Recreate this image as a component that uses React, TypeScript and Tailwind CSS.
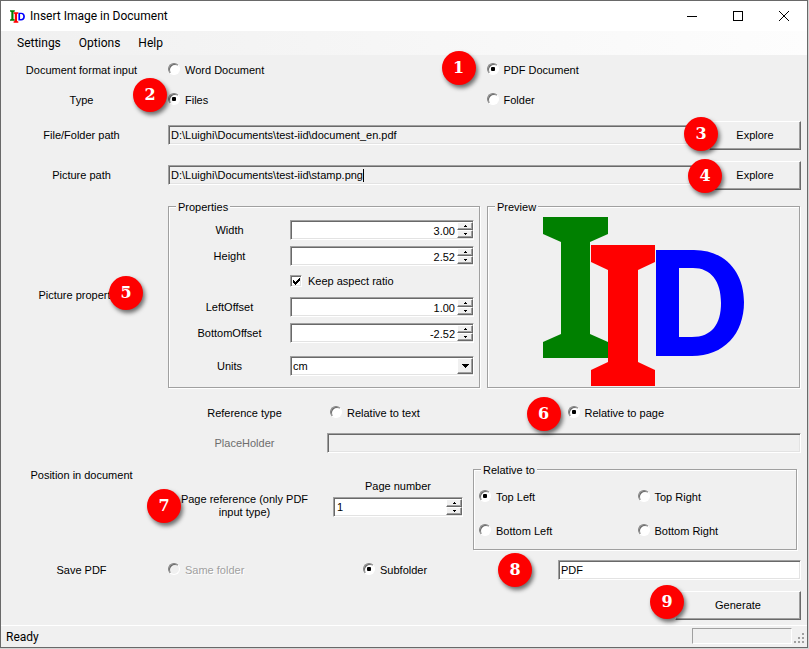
import { useId, useState } from 'react';
import type { ReactNode } from 'react';

const sunken =
  'border border-t-[#a0a0a0] border-l-[#a0a0a0] border-r-white border-b-white shadow-[inset_1px_1px_0_#696969,inset_-1px_-1px_0_#e3e3e3]';
const raised =
  'border border-t-white border-l-white border-r-[#696969] border-b-[#696969] shadow-[inset_-1px_-1px_0_#a0a0a0]';

function Badge({ n, className }: { n: number; className: string }) {
  return (
    <span
      className={`absolute z-10 flex size-[34px] items-center justify-center rounded-full bg-[#fe0000] font-['DejaVu_Serif',serif] text-base font-bold leading-none text-white shadow-[2px_3px_4px_rgba(0,0,0,0.55)] ${className}`}
    >
      {n}
    </span>
  );
}

function Radio({
  name,
  label,
  checked = false,
  disabled = false,
}: {
  name: string;
  label: string;
  checked?: boolean;
  disabled?: boolean;
}) {
  return (
    <label className={`flex items-center gap-[5px] ${disabled ? 'text-[#a0a0a0] [text-shadow:1px_1px_0_#fff]' : ''}`}>
      <span className="relative mb-[2px] grid size-3 shrink-0 place-items-center">
        <input
          type="radio"
          name={name}
          defaultChecked={checked}
          disabled={disabled}
          className={`peer absolute inset-0 m-0 size-3 appearance-none rounded-full border border-t-[#808080] border-l-[#808080] border-r-white border-b-white shadow-[inset_1px_1px_0_#696969] ${disabled ? 'bg-[#f0f0f0]' : 'bg-white'}`}
        />
        <span className="pointer-events-none z-1 size-1 rounded-[1px] bg-black opacity-0 peer-checked:opacity-100" />
      </span>
      <span>{label}</span>
    </label>
  );
}

function Group({ title, className = '', children }: { title: string; className?: string; children: ReactNode }) {
  return (
    <fieldset
      className={`relative mr-px min-w-0 border border-[#a0a0a0] shadow-[1px_1px_0_#fff,inset_1px_1px_0_#fff] ${className}`}
    >
      <legend className="absolute -top-[6px] left-[7px] bg-[#f0f0f0] px-[2px] leading-[13px]">{title}</legend>
      {children}
    </fieldset>
  );
}

function Spinner({ id, value, align = 'text-right' }: { id: string; value: string; align?: string }) {
  const [text, setText] = useState(value);
  const step = (d: number) => setText((t) => (value.includes('.') ? (Number(t) + d).toFixed(2) : String(Number(t) + d)));
  return (
    <div className={`flex h-5 w-full bg-white py-px pl-px ${sunken}`}>
      <input
        id={id}
        value={text}
        onChange={(e) => setText(e.target.value)}
        className={`min-w-0 flex-1 bg-transparent px-[2px] pt-[2px] outline-none ${align}`}
      />
      <div className="flex w-4 flex-col bg-[#f0f0f0]">
        <button type="button" aria-label="Increase" onClick={() => step(1)} className={`grid flex-1 place-items-center ${raised}`}>
          <svg width="3" height="2" viewBox="0 0 3 2" shapeRendering="crispEdges">
            <path d="M1 0h1v1h1v1H0V1h1z" />
          </svg>
        </button>
        <button type="button" aria-label="Decrease" onClick={() => step(-1)} className={`grid flex-1 place-items-center ${raised}`}>
          <svg width="3" height="2" viewBox="0 0 3 2" shapeRendering="crispEdges">
            <path d="M0 0h3v1H2v1H1V1H0z" />
          </svg>
        </button>
      </div>
    </div>
  );
}

function PropertyRow({ label, value }: { label: string; value: string }) {
  const id = useId();
  return (
    <>
      <label htmlFor={id} className="text-center">
        {label}
      </label>
      <Spinner id={id} value={value} />
    </>
  );
}

function Logo({ className }: { className: string }) {
  return (
    <svg viewBox="0 0 202 170" className={className} aria-hidden="true">
      <path fill="#008000" d="M0 0h65v17l-18 8v92l18 8v16H0v-16l18-8V25L0 17z" />
      <path fill="#f00" d="M48 28h64v17l-17 8v92l17 8v16H48v-16l17-8V53l-17-8z" />
      <path
        fill="#00f"
        fillRule="evenodd"
        d="M113 33h38c31 0 50 22 50 52 0 32-20 54-52 54h-36zM136 51v69h13c20 0 29-13 29-34 0-22-10-35-28-35z"
      />
    </svg>
  );
}

function PathRow({ label, value, children, caret = false }: { label: string; value: string; children: ReactNode; caret?: boolean }) {
  const id = useId();
  return (
    <>
      <label htmlFor={id} className="text-center">
        {label}
      </label>
      <div className="relative flex h-10 items-center gap-[6px]">
        <div className={`flex h-5 min-w-0 flex-1 items-center bg-[#f0f0f0] pl-[2px] ${sunken}`}>
          <input id={id} readOnly value={value} className="field-sizing-content min-w-0 max-w-full bg-transparent pt-px outline-none" />
          {caret && <span className="h-[13px] w-px bg-black" />}
        </div>
        <button type="button" className={`h-[29px] w-[92px] ${raised}`}>
          Explore
        </button>
        {children}
      </div>
    </>
  );
}

export default function App() {
  return (
    <div className="min-h-[649px] bg-[#d4d4d4] pr-px pb-px">
      <div className="flex min-h-[648px] flex-col border border-[#696969] bg-[#f0f0f0] font-['Liberation_Sans',Arial,sans-serif] text-[11px] leading-[13px] text-black">
        <header className="flex h-[30px] items-center bg-white pl-[9px] font-['Roboto','Noto_Sans',sans-serif] text-xs">
          <Logo className="h-[13px] w-[15px]" />
          <h1 className="ml-[5px] flex-1">Insert Image in Document</h1>
          <button type="button" aria-label="Minimize" className="grid h-full w-[46px] place-items-center">
            <svg width="10" height="10" stroke="#000" fill="none" shapeRendering="crispEdges">
              <path d="M0 5.5h10" />
            </svg>
          </button>
          <button type="button" aria-label="Maximize" className="grid h-full w-[46px] place-items-center">
            <svg width="10" height="10" stroke="#000" fill="none" shapeRendering="crispEdges">
              <path d="M.5.5h9v9h-9z" />
            </svg>
          </button>
          <button type="button" aria-label="Close" className="grid h-full w-[46px] place-items-center">
            <svg width="10" height="10" stroke="#000" fill="none">
              <path d="M0 0l10 10M10 0L0 10" />
            </svg>
          </button>
        </header>

        <nav className="flex h-6 items-center gap-[18px] bg-linear-to-r from-[#f0f0f0] to-[#fdfdfd] pl-4 font-['Roboto','Noto_Sans',sans-serif] text-xs">
          <button type="button">Settings</button>
          <button type="button">Options</button>
          <button type="button">Help</button>
        </nav>

        <main className="grid flex-1 grid-cols-[161px_1fr] content-start items-center gap-x-[6px] pr-[6px]">
          <span className="text-center">Document format input</span>
          <div className="relative grid h-[30px] grid-cols-2 items-center gap-x-1">
            <Radio name="format" label="Word Document" />
            <div className="relative">
              <Badge n={1} className="-top-[12px] -left-[45px]" />
              <Radio name="format" label="PDF Document" checked />
            </div>
          </div>

          <span className="text-center">Type</span>
          <div className="relative grid h-[30px] grid-cols-2 items-center gap-x-1">
            <Badge n={2} className="-top-[7px] -left-[35px]" />
            <Radio name="type" label="Files" checked />
            <Radio name="type" label="Folder" />
          </div>

          <PathRow label="File/Folder path" value="D:\Luighi\Documents\test-iid\document_en.pdf">
            <Badge n={3} className="top-[2px] right-[83px]" />
          </PathRow>
          <PathRow label="Picture path" value="D:\Luighi\Documents\test-iid\stamp.png" caret>
            <Badge n={4} className="top-[4px] right-[79px]" />
          </PathRow>

          <div className="relative text-center">
            Picture properties
            <Badge n={5} className="-top-[13px] left-[108px]" />
          </div>
          <div className="grid h-[200px] grid-cols-[313fr_314fr] items-stretch gap-[6px] pt-[11px] pb-[7px]">
            <Group title="Properties" className="grid grid-cols-[121px_1fr] content-start items-center gap-y-[6px] pt-[13px] pr-[5px]">
              <PropertyRow label="Width" value="3.00" />
              <PropertyRow label="Height" value="2.52" />
              <label className="col-start-2 mb-px flex h-[18px] items-center gap-[6px]">
                <span className="relative size-3 shrink-0">
                  <input type="checkbox" defaultChecked className={`peer absolute inset-0 m-0 size-3 appearance-none bg-white ${sunken}`} />
                  <svg viewBox="0 0 12 12" className="pointer-events-none absolute inset-0 size-3 opacity-0 peer-checked:opacity-100" shapeRendering="crispEdges">
                    <path d="M3 5v3h1v1h1v1h1V9h1V8h1V7h1V6h1V3H9v1H8v1H7v1H6v1H5V6H4V5z" />
                  </svg>
                </span>
                Keep aspect ratio
              </label>
              <PropertyRow label="LeftOffset" value="1.00" />
              <PropertyRow label="BottomOffset" value="-2.52" />
              <label htmlFor="units" className="mt-[7px] text-center">
                Units
              </label>
              <div className={`relative mt-[7px] flex h-5 bg-white ${sunken}`}>
                <select id="units" className="w-full appearance-none bg-transparent pl-[2px] outline-none">
                  <option>cm</option>
                </select>
                <span className={`pointer-events-none absolute inset-y-px right-0 grid w-4 place-items-center bg-[#f0f0f0] ${raised}`}>
                  <svg width="7" height="4" shapeRendering="crispEdges">
                    <path d="M0 0h7v1H6v1H5v1H4v1H3V3H2V2H1V1H0z" />
                  </svg>
                </span>
              </div>
            </Group>
            <Group title="Preview" className="flex items-start justify-center pt-[10px]">
              <Logo className="h-[170px] w-[202px]" />
            </Group>
          </div>

          <span className="text-center">Position in document</span>
          <div className="grid h-[160px] grid-cols-[153px_1fr] content-start items-center gap-x-[6px] pt-[3px]">
            <span className="text-center">Reference type</span>
            <div className="grid h-[30px] grid-cols-2 items-center gap-x-1 pl-[3px]">
              <Radio name="reference" label="Relative to text" />
              <div className="relative">
                <Badge n={6} className="-top-[9px] -left-[41px]" />
                <Radio name="reference" label="Relative to page" checked />
              </div>
            </div>
            <label htmlFor="placeholder" className="text-center text-[#6d6d6d]">
              PlaceHolder
            </label>
            <div className="flex h-[30px] items-center">
              <input id="placeholder" disabled className={`h-5 w-full bg-[#f0f0f0] ${sunken}`} />
            </div>
            <div className="relative px-2 text-center">
              Page reference (only PDF input type)
              <Badge n={7} className="-top-[4px] -left-[21px]" />
            </div>
            <div className="flex h-24 items-center gap-[10px] pr-[3px] pl-[6px]">
              <div className="flex w-[130px] flex-col items-center gap-1 pb-4">
                <label htmlFor="page">Page number</label>
                <Spinner id="page" value="1" align="text-left" />
              </div>
              <Group title="Relative to" className="mt-[7px] grid h-[81px] flex-1 grid-cols-2 content-start items-center pt-[10px] pl-[5px]">
                <div className="h-[34px] content-center">
                  <Radio name="corner" label="Top Left" checked />
                </div>
                <Radio name="corner" label="Top Right" />
                <div className="h-[34px] content-center">
                  <Radio name="corner" label="Bottom Left" />
                </div>
                <Radio name="corner" label="Bottom Right" />
              </Group>
            </div>
          </div>

          <span className="text-center">Save PDF</span>
          <div className="grid h-[30px] grid-cols-[1fr_1fr_243px] items-center">
            <Radio name="save" label="Same folder" disabled />
            <Radio name="save" label="Subfolder" checked />
            <div className="relative">
              <Badge n={8} className="-top-[7px] -left-[60px]" />
              <input aria-label="Subfolder name" defaultValue="PDF" className={`block h-5 w-full bg-white px-[2px] outline-none ${sunken}`} />
            </div>
          </div>

          <div className="relative col-start-2 flex h-10 items-center justify-end">
            <button type="button" className={`h-[29px] w-[126px] ${raised}`}>
              Generate
            </button>
            <Badge n={9} className="top-0 right-[117px]" />
          </div>
        </main>

        <footer className="flex h-[22px] items-center border-t border-white pr-px pl-[5px] font-['Roboto','Noto_Sans',sans-serif] text-xs">
          <span className="flex-1">Ready</span>
          <div className="mb-px h-4 w-[100px] border border-t-[#a0a0a0] border-l-[#a0a0a0] border-r-white border-b-white" />
          <svg width="12" height="12" className="mt-1 ml-[2px]" fill="#a0a0a0" shapeRendering="crispEdges">
            <path d="M8 0h2v2H8zM4 4h2v2H4zM8 4h2v2H8zM0 8h2v2H0zM4 8h2v2H4zM8 8h2v2H8z" />
          </svg>
        </footer>
      </div>
    </div>
  );
}
